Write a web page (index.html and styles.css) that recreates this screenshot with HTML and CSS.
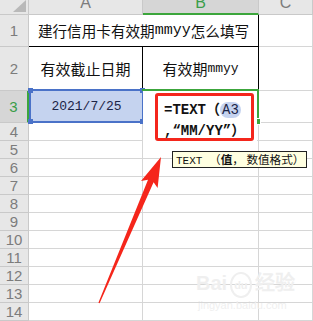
FILE: index.html
```html
<!DOCTYPE html>
<html lang="zh-CN">
<head>
    <meta charset="UTF-8">
    <title>TEXT 函数</title>
    <link rel="stylesheet" href="styles.css">
</head>
<body>
    <div class="sheet">
        <div class="corner"></div>
        <div class="colh"><span>A</span></div>
        <div class="colh on"><span>B</span></div>
        <div class="colh"><span>C</span></div>

        <div class="rowh">1</div>
        <div class="cell title">建行信用卡有效期<span class="mono">mmyy</span>怎么填写</div>
        <div class="cell"></div>

        <div class="rowh">2</div>
        <div class="cell head">有效截止日期</div>
        <div class="cell head">有效期<span class="mono sm">mmyy</span></div>
        <div class="cell"></div>

        <div class="rowh on">3</div>
        <div class="cell ref">
            <div class="sel">
                <i class="dot tl"></i><i class="dot tr"></i><i class="dot bl"></i><i class="dot br"></i>
                <span>2021/7/25</span>
            </div>
        </div>
        <div class="cell active">
            <div class="cursor"><i class="fill"></i></div>
            <div class="editor">
                <div class="formula">
                    <div>=TEXT<span class="cjk">（</span><span class="arg">A3</span></div>
                    <div>,“MM/YY”<span class="cjk">）</span></div>
                </div>
            </div>
        </div>
        <div class="cell"></div>

        <div class="rowh">4</div><div class="cell"></div><div class="cell"></div><div class="cell"></div>
        <div class="rowh">5</div><div class="cell"></div><div class="cell"></div><div class="cell"></div>
        <div class="rowh">6</div><div class="cell"></div><div class="cell"></div><div class="cell"></div>
        <div class="rowh">7</div><div class="cell"></div><div class="cell"></div><div class="cell"></div>
        <div class="rowh">8</div><div class="cell"></div><div class="cell"></div><div class="cell"></div>
        <div class="rowh">9</div><div class="cell"></div><div class="cell"></div><div class="cell"></div>
        <div class="rowh">10</div><div class="cell"></div><div class="cell"></div><div class="cell"></div>
        <div class="rowh">11</div><div class="cell"></div><div class="cell"></div><div class="cell"></div>
        <div class="rowh">12</div><div class="cell"></div><div class="cell"></div><div class="cell"></div>
        <div class="rowh">13</div><div class="cell"></div><div class="cell"></div><div class="cell"></div>
        <div class="rowh">14</div><div class="cell"></div><div class="cell"></div><div class="cell"></div>

        <div class="tip">TEXT <span class="cjk">（<b>值</b>，&nbsp;数值格式）</span></div>

        <svg class="arrow" viewBox="0 0 313 321" width="313" height="321">
            <polygon points="161,157 157.6,188.1 153.6,182.2 99.6,303.2 98.4,302.8 148,179.8 141,181.1" fill="#f5261b"/>
        </svg>

        <div class="mark">
            <div class="mark-top">Bai<span class="paw">du</span>经验</div>
            <div class="mark-url">jingyan.baidu.com</div>
        </div>
    </div>
</body>
</html>
```

FILE: styles.css
```css
body {
    margin: 0;
    padding: 0;
    background: #fff;
}
.sheet {
    position: relative;
    width: 313px;
    height: 321px;
    overflow: hidden;
    display: grid;
    grid-template-columns: 29px 114px 116px 1fr;
    grid-template-rows: 15px 32px 44px 32px repeat(11, 18px);
    font-family: "Noto Sans CJK SC", sans-serif;
}
.corner, .colh, .rowh {
    box-sizing: border-box;
    background: #e7e7e7;
    border-right: 1px solid #c9c9c9;
    border-bottom: 1px solid #c9c9c9;
    color: #7c7c7c;
    font-family: "Liberation Sans", Arial, sans-serif;
}
.corner {
    position: relative;
}
.corner::after {
    content: "";
    position: absolute;
    right: 2px;
    bottom: 2px;
    width: 13px;
    height: 12px;
    background: #b9b9b9;
    clip-path: polygon(100% 0, 100% 100%, 0 100%);
}
.colh {
    display: flex;
    justify-content: center;
    font-size: 16px;
}
.colh span {
    margin-top: -5px;
    line-height: 16px;
}
.colh.on {
    background: #d6d6d6;
    border-bottom: 2px solid #3ca63c;
    color: #3a9d4a;
}
.rowh {
    display: flex;
    align-items: center;
    justify-content: center;
    font-size: 15px;
}
.rowh.on {
    background: #d6d6d6;
    border-right: 2px solid #3ca63c;
    color: #3a9d4a;
}
.cell {
    box-sizing: border-box;
    border-right: 1px solid #d6d6d6;
    border-bottom: 1px solid #d6d6d6;
}
.title {
    grid-column: span 2;
    display: flex;
    align-items: center;
    justify-content: center;
    font-size: 14.6px;
    color: #111;
    border-right-color: #000;
    border-bottom-color: #000;
}
.head {
    display: flex;
    align-items: center;
    justify-content: center;
    font-size: 15px;
    color: #111;
    border-right-color: #000;
}
.mono {
    font-family: "Liberation Mono", monospace;
    font-size: 15px;
}
.mono.sm {
    font-size: 13px;
}
.ref {
    position: relative;
}
.sel {
    position: absolute;
    top: -2px;
    left: 0;
    right: -2px;
    bottom: -1px;
    border: 2px solid #4a72c8;
    background: #c5d3ef;
    display: flex;
    align-items: center;
    justify-content: center;
    font-family: "Liberation Mono", monospace;
    font-size: 13px;
    color: #1b2547;
}
.dot {
    position: absolute;
    width: 5px;
    height: 5px;
    background: #4a72c8;
}
.dot.tl { top: -3px; left: -3px; }
.dot.tr { top: -3px; right: -3px; }
.dot.bl { bottom: -3px; left: -3px; }
.dot.br { bottom: -3px; right: -3px; }
.active {
    position: relative;
}
.cursor {
    position: absolute;
    top: -2px;
    left: -1px;
    right: -1px;
    bottom: -1px;
    border-top: 2px solid #3ca63c;
    border-right: 2px solid #3ca63c;
}
.fill {
    position: absolute;
    right: -4px;
    bottom: -2px;
    width: 5px;
    height: 5px;
    background: #3ca63c;
    border: 1px solid #fff;
}
.editor {
    position: absolute;
    top: 0;
    left: 0;
    right: 1px;
    height: 51px;
    background: #fff;
    z-index: 2;
}
.formula {
    position: absolute;
    left: 12px;
    top: 2px;
    width: 99px;
    height: 48px;
    box-sizing: border-box;
    border: 3px solid #f4261c;
    border-radius: 3px;
    padding: 3px 0 0 6px;
    font-family: "Liberation Mono", monospace;
    font-weight: bold;
    font-size: 14px;
    line-height: 19px;
    color: #111;
    white-space: nowrap;
}
.cjk {
    font-family: "Noto Sans CJK SC", sans-serif;
}
.arg {
    background: #c5d3ef;
    border-radius: 8px;
    padding: 0 2px;
    font-weight: normal;
    color: #1b2547;
}
.tip {
    position: absolute;
    left: 172px;
    top: 151px;
    width: 135px;
    height: 17px;
    box-sizing: border-box;
    border: 1px solid #222;
    background: #ffffe1;
    padding-left: 3px;
    font-family: "Liberation Mono", monospace;
    font-size: 11px;
    line-height: 15px;
    color: #111;
    white-space: nowrap;
    z-index: 3;
}
.tip .cjk {
    font-size: 11.6px;
}
.tip b {
    font-weight: bold;
}
.arrow {
    position: absolute;
    left: 0;
    top: 0;
    z-index: 4;
}
.mark {
    position: absolute;
    left: 196px;
    top: 272px;
    color: #efefef;
    font-family: "Liberation Sans", Arial, sans-serif;
    z-index: 1;
}
.mark-top {
    font-size: 20px;
    font-weight: bold;
    line-height: 22px;
}
.paw {
    display: inline-block;
    font-size: 11px;
    border: 2px solid #efefef;
    border-radius: 50%;
    padding: 0 2px;
    margin: 0 3px;
    vertical-align: middle;
}
.mark-url {
    font-size: 11px;
    line-height: 14px;
    padding-left: 2px;
}
```
